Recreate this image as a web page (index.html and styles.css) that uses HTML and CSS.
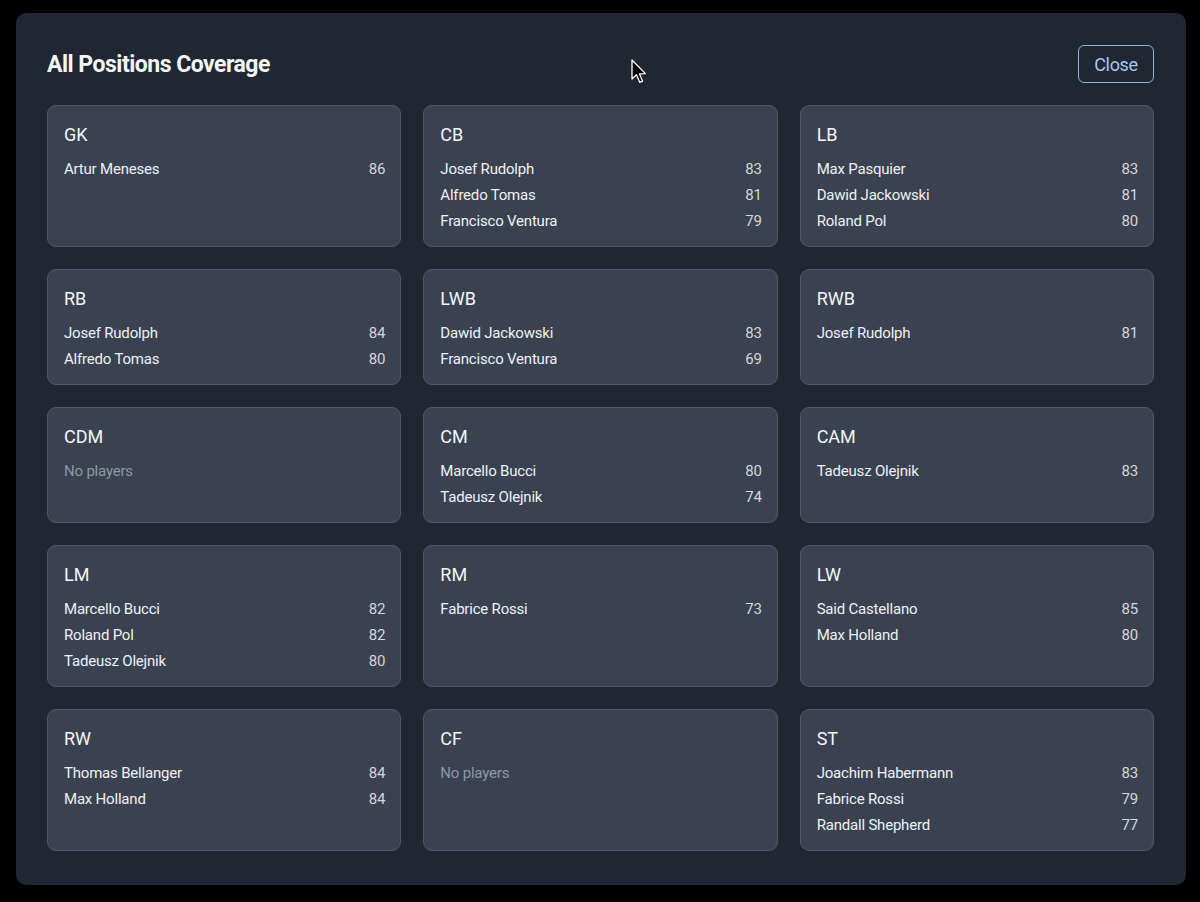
FILE: index.html
```html
<!DOCTYPE html>
<html>
<head>
<meta charset="utf-8">
<link rel="stylesheet" href="styles.css">
</head>
<body>
<div class="modal">
  <div class="header">
    <h2 class="title">All Positions Coverage</h2>
    <button class="close">Close</button>
  </div>
  <div class="grid">
    <div class="card"><div class="pos">GK</div>
      <div class="row"><span>Artur Meneses</span><span class="num">86</span></div>
    </div>
    <div class="card"><div class="pos">CB</div>
      <div class="row"><span>Josef Rudolph</span><span class="num">83</span></div>
      <div class="row"><span>Alfredo Tomas</span><span class="num">81</span></div>
      <div class="row"><span>Francisco Ventura</span><span class="num">79</span></div>
    </div>
    <div class="card"><div class="pos">LB</div>
      <div class="row"><span>Max Pasquier</span><span class="num">83</span></div>
      <div class="row"><span>Dawid Jackowski</span><span class="num">81</span></div>
      <div class="row"><span>Roland Pol</span><span class="num">80</span></div>
    </div>
    <div class="card"><div class="pos">RB</div>
      <div class="row"><span>Josef Rudolph</span><span class="num">84</span></div>
      <div class="row"><span>Alfredo Tomas</span><span class="num">80</span></div>
    </div>
    <div class="card"><div class="pos">LWB</div>
      <div class="row"><span>Dawid Jackowski</span><span class="num">83</span></div>
      <div class="row"><span>Francisco Ventura</span><span class="num">69</span></div>
    </div>
    <div class="card"><div class="pos">RWB</div>
      <div class="row"><span>Josef Rudolph</span><span class="num">81</span></div>
    </div>
    <div class="card"><div class="pos">CDM</div>
      <div class="empty">No players</div>
    </div>
    <div class="card"><div class="pos">CM</div>
      <div class="row"><span>Marcello Bucci</span><span class="num">80</span></div>
      <div class="row"><span>Tadeusz Olejnik</span><span class="num">74</span></div>
    </div>
    <div class="card"><div class="pos">CAM</div>
      <div class="row"><span>Tadeusz Olejnik</span><span class="num">83</span></div>
    </div>
    <div class="card"><div class="pos">LM</div>
      <div class="row"><span>Marcello Bucci</span><span class="num">82</span></div>
      <div class="row"><span>Roland Pol</span><span class="num">82</span></div>
      <div class="row"><span>Tadeusz Olejnik</span><span class="num">80</span></div>
    </div>
    <div class="card"><div class="pos">RM</div>
      <div class="row"><span>Fabrice Rossi</span><span class="num">73</span></div>
    </div>
    <div class="card"><div class="pos">LW</div>
      <div class="row"><span>Said Castellano</span><span class="num">85</span></div>
      <div class="row"><span>Max Holland</span><span class="num">80</span></div>
    </div>
    <div class="card"><div class="pos">RW</div>
      <div class="row"><span>Thomas Bellanger</span><span class="num">84</span></div>
      <div class="row"><span>Max Holland</span><span class="num">84</span></div>
    </div>
    <div class="card"><div class="pos">CF</div>
      <div class="empty">No players</div>
    </div>
    <div class="card"><div class="pos">ST</div>
      <div class="row"><span>Joachim Habermann</span><span class="num">83</span></div>
      <div class="row"><span>Fabrice Rossi</span><span class="num">79</span></div>
      <div class="row"><span>Randall Shepherd</span><span class="num">77</span></div>
    </div>
  </div>
</div>
<svg class="cursor" width="16" height="26" viewBox="0 0 16 26">
  <path d="M1 1 L1 20 L5.5 15.8 L8.8 23.4 L11.6 22.2 L8.4 14.8 L14.4 14.6 Z" fill="#000" stroke="#fff" stroke-width="1.3" stroke-linejoin="round"/>
</svg>
</body>
</html>
```
FILE: styles.css
```css
html, body {
  margin: 0;
  padding: 0;
  background: #000;
  width: 1200px;
  height: 902px;
  overflow: hidden;
}
body {
  font-family: Roboto, "Noto Sans", sans-serif;
  color: #eef1f5;
  padding: 13px 14px 0 16px;
  box-sizing: border-box;
}
.modal {
  width: 1170px;
  height: 872px;
  box-sizing: border-box;
  background: #1f2733;
  border-radius: 10px;
  padding: 31px 32px 32px 31px;
}
.header {
  display: flex;
  justify-content: space-between;
  align-items: center;
  height: 40px;
  margin-bottom: 21px;
}
.title {
  margin: 0;
  font-size: 23px;
  font-weight: 700;
  letter-spacing: -0.5px;
  color: #f4f6f8;
}
.close {
  width: 76px;
  height: 38px;
  background: transparent;
  border: 1.5px solid #8fb3dd;
  border-radius: 6px;
  color: #a8c6ea;
  font-family: Roboto, "Noto Sans", sans-serif;
  font-size: 18px;
  letter-spacing: -0.3px;
  padding: 0;
}
.grid {
  display: grid;
  grid-template-columns: repeat(3, 1fr);
  column-gap: 22px;
  row-gap: 22px;
}
.card {
  background: #3a4150;
  border: 1px solid #4f5768;
  border-radius: 9px;
  padding: 16px 15px 12px 16px;
}
.pos {
  font-size: 18px;
  line-height: 26px;
  margin-bottom: 8px;
  color: #f4f6f8;
}
.row, .empty {
  display: flex;
  justify-content: space-between;
  font-size: 15px;
  line-height: 26px;
  letter-spacing: -0.2px;
}
.num {
  color: #d3d7de;
}
.empty {
  color: #8e97a4;
}
.cursor {
  position: absolute;
  left: 631px;
  top: 59px;
}
```
